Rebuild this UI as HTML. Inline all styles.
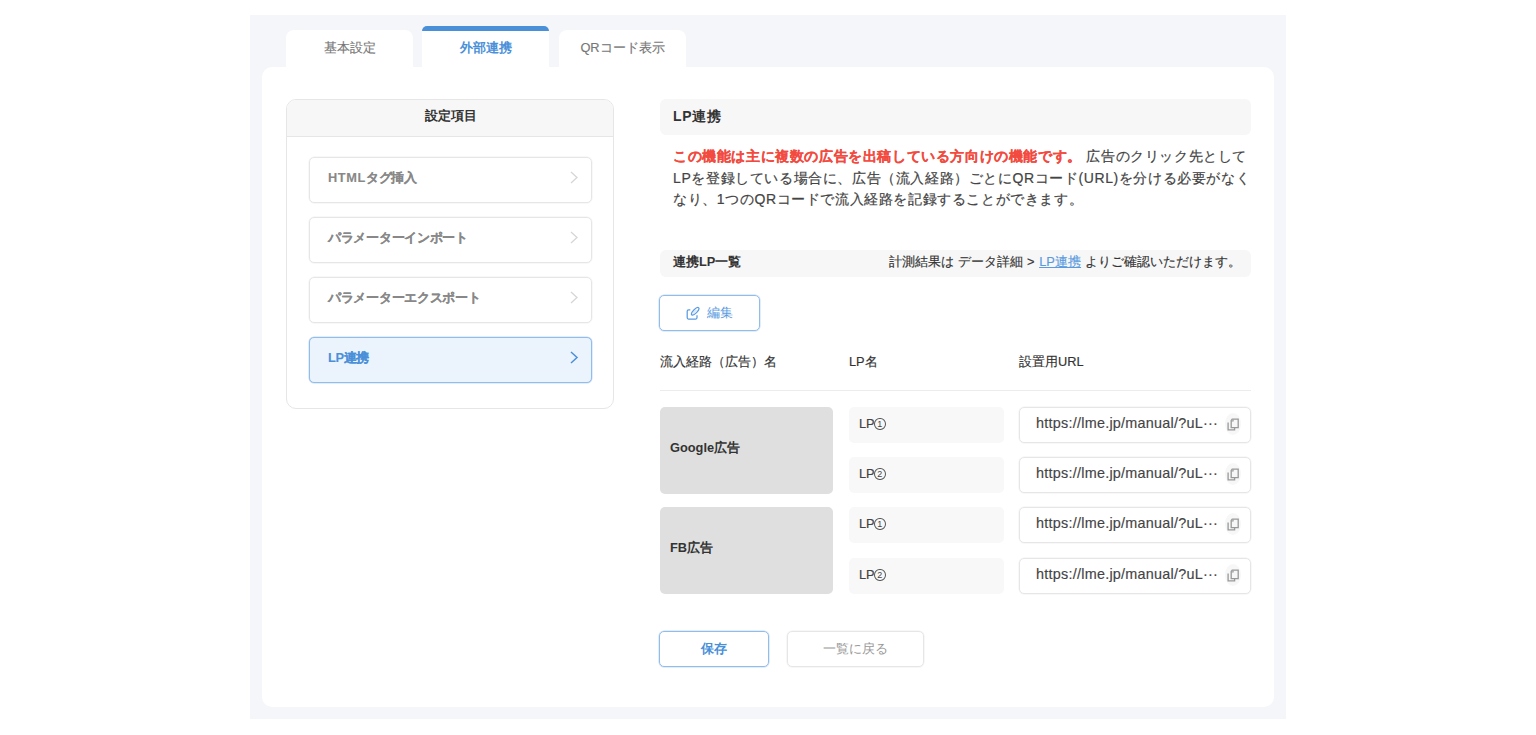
<!DOCTYPE html>
<html><head><meta charset="utf-8">
<style>
*{box-sizing:border-box;margin:0;padding:0}
html,body{width:1536px;height:735px;overflow:hidden;background:#fff;font-family:"Liberation Sans",sans-serif;color:#333}
.stk{-webkit-text-stroke:0.15px currentColor}
.abs{position:absolute}
#outer{left:250px;top:15px;width:1036px;height:704px;background:#f5f6fa}
#card{left:262px;top:67px;width:1012px;height:640px;background:#fff;border-radius:10px}
.tab{top:30px;height:37px;width:127px;background:#fff;border-radius:8px 8px 0 0;font-size:12.8px;color:#777;text-align:center;line-height:35px}
.tab.active{top:26px;height:41px;border-radius:5px 5px 0 0;background:linear-gradient(#4a90d9 0,#4a90d9 4.5px,#fff 4.5px);color:#4a90d9;font-weight:bold;line-height:43px}
#panel{left:286px;top:99px;width:328px;height:310px;border:1px solid #e6e6e6;border-radius:10px;overflow:hidden}
#phead{left:0;top:0;width:326px;height:36.5px;background:#f7f7f7;border-bottom:1.2px solid #e6e6e6;text-align:center;font-weight:bold;font-size:12.8px;line-height:31.5px;color:#333;padding-left:2px}
.item{left:309px;width:283px;height:46px;border:1px solid #e6e6e6;box-shadow:0 0 0 0.5px #f2f2f2;border-radius:5px;font-size:12.8px;font-weight:bold;color:#888;line-height:40px;padding-left:18px;letter-spacing:-0.3px;-webkit-text-stroke:0.1px currentColor}
.item.active{background:#ebf3fc;border-color:#92bcea;box-shadow:0 0 0 0.5px #c3dbf3;color:#4a90d9}
.chev{position:absolute;right:11px;top:13px;width:12px;height:13px}
.hbar{background:#f7f7f7;border-radius:6px}
.desc{-webkit-text-stroke:0.2px #444;font-size:14px;letter-spacing:0.6px;line-height:21.5px;color:#444;white-space:nowrap}
.red{color:#f24a3e;font-weight:bold;-webkit-text-stroke:0.12px #f24a3e}
.circ{position:absolute;top:10.5px;left:25px;width:11.5px;height:12.3px;border:1px solid #555;border-radius:50%;font-size:9px;line-height:10.5px;text-align:center;-webkit-text-stroke:0;font-weight:normal}
.lpbox{-webkit-text-stroke:0.2px #444;background:#f8f8f8;border-radius:5px;width:155px;height:36px;left:849px;font-size:12.8px;line-height:34px;padding-left:10px;color:#444}
.grp{background:#dfdfdf;border-radius:5px;width:173px;height:87px;left:660px;font-size:12.8px;font-weight:bold;line-height:81px;padding-left:10px;color:#333}
.url{-webkit-text-stroke:0.15px #444;left:1019px;width:232px;height:36px;border:1px solid #e6e6e6;box-shadow:0 0 0 0.5px #f2f2f2;border-radius:5px;font-size:14.4px;line-height:30px;padding-left:16px;color:#444;white-space:nowrap;letter-spacing:0.25px}
.copy{position:absolute;left:205px;top:5px;width:16px;height:22px;border-radius:50%;background:#f7f7f7;line-height:0}
.btn{height:36px;border:1px solid #92bcea;box-shadow:0 0 0 0.5px #c3dbf3;border-radius:5px;text-align:center;line-height:34px;font-size:12.8px;color:#4a90d9}
</style></head><body>
<div id="outer" class="abs"></div>
<div id="card" class="abs"></div>
<div class="abs tab stk" style="left:286px">基本設定</div>
<div class="abs tab active" style="left:422px">外部連携</div>
<div class="abs tab stk" style="left:559px">QRコード表示</div>

<div id="panel" class="abs"><div id="phead" class="abs">設定項目</div></div>
<div class="abs item" style="top:157px"><span style="letter-spacing:0.6px">HTML</span>タグ挿入<svg class="chev" viewBox="0 0 12 13"><path d="M3 1 L9 6.5 L3 12" fill="none" stroke="#d6d6d6" stroke-width="1.3"/></svg></div>
<div class="abs item" style="top:217px">パラメーターインポート<svg class="chev" viewBox="0 0 12 13"><path d="M3 1 L9 6.5 L3 12" fill="none" stroke="#d6d6d6" stroke-width="1.3"/></svg></div>
<div class="abs item" style="top:277px">パラメーターエクスポート<svg class="chev" viewBox="0 0 12 13"><path d="M3 1 L9 6.5 L3 12" fill="none" stroke="#d6d6d6" stroke-width="1.3"/></svg></div>
<div class="abs item active" style="top:337px">LP連携<svg class="chev" viewBox="0 0 12 13"><path d="M3 1 L9 6.5 L3 12" fill="none" stroke="#4a90d9" stroke-width="1.5"/></svg></div>

<div class="abs hbar" style="left:660px;top:99px;width:591px;height:36px;font-size:14px;letter-spacing:0.6px;font-weight:bold;line-height:35px;padding-left:13px">LP連携</div>
<div class="abs desc" style="left:673px;top:146px"><span class="red">この機能は主に複数の広告を出稿している方向けの機能です。</span> 広告のクリック先として<br>LPを登録している場合に、広告（流入経路）ごとにQRコード(URL)を分ける必要がなく<br>なり、1つのQRコードで流入経路を記録することができます。</div>

<div class="abs hbar" style="left:660px;top:250px;width:591px;height:27px;font-size:12.8px;line-height:23px;padding-left:13px"><b>連携LP一覧</b></div>
<div class="abs stk" style="left:889px;top:248px;font-size:12.8px;letter-spacing:0.07px;line-height:27px;white-space:nowrap">計測結果は データ詳細 &gt; <span style="color:#5a9be0;text-decoration:underline;margin-left:1px">LP連携</span> よりご確認いただけます。</div>

<div class="abs btn" style="left:659px;top:295px;width:101px"></div>
<svg class="abs" style="left:686px;top:305.5px" width="14" height="14" viewBox="0 0 14 14"><path d="M4.3 3.9 H2.6 a1.4 1.4 0 0 0 -1.4 1.4 V11.6 a1.4 1.4 0 0 0 1.4 1.4 H9.6 a1.4 1.4 0 0 0 1.4 -1.4 V9.3" fill="none" stroke="#5a9be0" stroke-width="1.25"/><ellipse cx="9.2" cy="5.3" rx="4.9" ry="1.85" transform="rotate(-45 9.2 5.3)" fill="none" stroke="#5a9be0" stroke-width="1.25"/><path d="M6.6 7.9 L10.6 3.9" stroke="#a9cbef" stroke-width="0.8"/></svg>
<div class="abs" style="left:707px;top:303px;font-size:12.8px;line-height:20px;color:#5a9be0">編集</div>

<div class="abs stk" style="left:660px;top:354px;font-size:12.8px;color:#333">流入経路（広告）名</div>
<div class="abs stk" style="left:849px;top:354px;font-size:12.8px;color:#333">LP名</div>
<div class="abs stk" style="left:1019px;top:354px;font-size:12.8px;color:#333">設置用URL</div>
<div class="abs" style="left:660px;top:390px;width:591px;height:1px;background:#ececec"></div>

<div class="abs grp" style="top:407px">Google広告</div>
<div class="abs grp" style="top:507px">FB広告</div>
<div class="abs lpbox" style="top:407px">LP<span class="circ">1</span></div>
<div class="abs lpbox" style="top:457px">LP<span class="circ">2</span></div>
<div class="abs lpbox" style="top:507px">LP<span class="circ">1</span></div>
<div class="abs lpbox" style="top:558px">LP<span class="circ">2</span></div>
<div class="abs url" style="top:407px">https://lme.jp/manual/?uL···<span class="copy"><svg width="16" height="22" viewBox="0 0 16 22"><path d="M3.1 9.6 V16.9 H9.6 V15.1" fill="none" stroke="#999" stroke-width="1.3"/><path d="M7.2 6.2 H13.2 V14.6 H6.2 V7.4 Z" fill="none" stroke="#999" stroke-width="1.3"/><path d="M6.2 8.6 L8.6 6.2 V8.6 Z" fill="#999"/></svg></span></div>
<div class="abs url" style="top:457px">https://lme.jp/manual/?uL···<span class="copy"><svg width="16" height="22" viewBox="0 0 16 22"><path d="M3.1 9.6 V16.9 H9.6 V15.1" fill="none" stroke="#999" stroke-width="1.3"/><path d="M7.2 6.2 H13.2 V14.6 H6.2 V7.4 Z" fill="none" stroke="#999" stroke-width="1.3"/><path d="M6.2 8.6 L8.6 6.2 V8.6 Z" fill="#999"/></svg></span></div>
<div class="abs url" style="top:507px">https://lme.jp/manual/?uL···<span class="copy"><svg width="16" height="22" viewBox="0 0 16 22"><path d="M3.1 9.6 V16.9 H9.6 V15.1" fill="none" stroke="#999" stroke-width="1.3"/><path d="M7.2 6.2 H13.2 V14.6 H6.2 V7.4 Z" fill="none" stroke="#999" stroke-width="1.3"/><path d="M6.2 8.6 L8.6 6.2 V8.6 Z" fill="#999"/></svg></span></div>
<div class="abs url" style="top:558px">https://lme.jp/manual/?uL···<span class="copy"><svg width="16" height="22" viewBox="0 0 16 22"><path d="M3.1 9.6 V16.9 H9.6 V15.1" fill="none" stroke="#999" stroke-width="1.3"/><path d="M7.2 6.2 H13.2 V14.6 H6.2 V7.4 Z" fill="none" stroke="#999" stroke-width="1.3"/><path d="M6.2 8.6 L8.6 6.2 V8.6 Z" fill="#999"/></svg></span></div>

<div class="abs btn" style="left:659px;top:631px;width:110px;font-weight:bold">保存</div>
<div class="abs btn" style="left:787px;top:631px;width:137px;border-color:#e6e6e6;box-shadow:0 0 0 0.5px #f0f0f0;color:#999">一覧に戻る</div>
</body></html>
